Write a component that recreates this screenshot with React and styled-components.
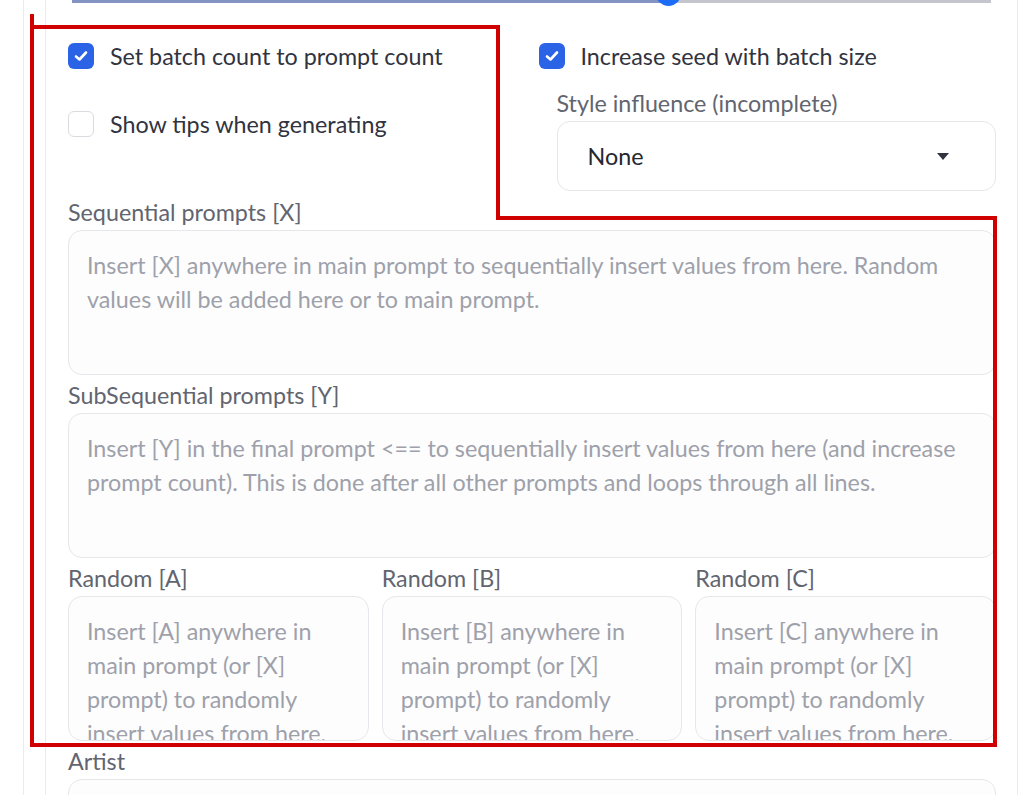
import React from "react";
import styled, { createGlobalStyle } from "styled-components";

const GlobalStyle = createGlobalStyle`
  html, body {
    margin: 0;
    padding: 0;
    background: #ffffff;
    font-family: Lato, "Noto Sans", sans-serif;
  }
  * { box-sizing: border-box; }
`;

const Page = styled.div`
  width: 1024px;
  height: 795px;
  overflow: hidden;
  position: relative;
  background: #ffffff;
`;

const Frame = styled.div`
  margin-left: 23px;
  width: 995px;
  height: 795px;
  border-left: 1px solid #ebebef;
  border-right: 1px solid #ebebef;
  padding-left: 21px;
`;

const Panel = styled.div`
  height: 100%;
  border-left: 1px solid #ebebef;
  padding: 0 21px 0 22px;
  display: flex;
  flex-direction: column;
`;

const Slider = styled.div`
  position: relative;
  flex: none;
  margin: 0 5px 0 4px;
  height: 3px;
  background: #c3c6cc;
`;

const SliderFill = styled.div`
  height: 100%;
  background: #8393c2;
`;

const SliderThumb = styled.div`
  position: absolute;
  top: -19px;
  width: 25px;
  height: 25px;
  margin-left: -12px;
  border-radius: 50%;
  background: #1c6cf5;
`;

const Columns = styled.div`
  display: grid;
  grid-template-columns: 1fr 1fr;
  column-gap: 13px;
  margin-top: 39px;
`;

const Column = styled.div`
  display: flex;
  flex-direction: column;
  gap: ${(p) => p.$gap || 0}px;
`;

const CheckRow = styled.label`
  display: flex;
  align-items: center;
  gap: 16px;
  height: 28px;
  font-size: 23.3px;
  color: #31333f;
  white-space: nowrap;
`;

const Box = styled.span`
  flex: none;
  width: 26px;
  height: 26px;
  border-radius: 6px;
  display: flex;
  align-items: center;
  justify-content: center;
  background: ${(p) => (p.$checked ? "#2a63e6" : "#ffffff")};
  border: ${(p) => (p.$checked ? "none" : "1.5px solid #d9dbe0")};
`;

const Field = styled.div`
  display: flex;
  flex-direction: column;
  gap: 4px;
  margin-left: ${(p) => p.$indent || 0}px;
`;

const Label = styled.div`
  height: 28px;
  line-height: 28px;
  font-size: 23.3px;
  color: #62656f;
  white-space: nowrap;
`;

const Select = styled.div`
  height: 70px;
  border: 1px solid #e6e7ea;
  border-radius: 13px;
  background: #ffffff;
  display: flex;
  align-items: center;
  justify-content: space-between;
  padding: 0 46px 0 30px;
  font-size: 23.3px;
  color: #262730;
`;

const Stack = styled.div`
  display: flex;
  flex-direction: column;
  gap: 6px;
  margin-top: 7px;
`;

const TextArea = styled.textarea`
  display: block;
  width: 100%;
  height: ${(p) => p.$h || 145}px;
  resize: none;
  overflow: hidden;
  border: 1px solid #e6e7ea;
  border-radius: 14px;
  background: #fdfdfe;
  padding: 17px 18px;
  font-family: Lato, "Noto Sans", sans-serif;
  font-size: 23.3px;
  line-height: 34px;
  color: #31333f;
  outline: none;
  &::placeholder {
    color: #9ea1aa;
    opacity: 1;
  }
`;

const Triple = styled.div`
  display: grid;
  grid-template-columns: repeat(3, 1fr);
  column-gap: 13px;
`;

const Markup = styled.svg`
  position: absolute;
  top: 0;
  left: 0;
  pointer-events: none;
`;

function Check({ checked, children }) {
  return (
    <CheckRow>
      <Box $checked={checked}>
        {checked && (
          <svg width="16" height="16" viewBox="0 0 16 16">
            <path d="M3 8.5 L6.5 11.5 L13 4.5" fill="none" stroke="#fff" strokeWidth="2.6" strokeLinecap="round" strokeLinejoin="round" />
          </svg>
        )}
      </Box>
      {children}
    </CheckRow>
  );
}

const randoms = ["A", "B", "C"];

export default function App() {
  const sliderValue = 0.648;
  return (
    <>
      <GlobalStyle />
      <Page>
        <Frame>
          <Panel>
            <Slider>
              <SliderFill style={{ width: `${sliderValue * 100}%` }} />
              <SliderThumb style={{ left: `${sliderValue * 100}%` }} />
            </Slider>

            <Columns>
              <Column $gap={40}>
                <Check checked>Set batch count to prompt count</Check>
                <Check>Show tips when generating</Check>
              </Column>
              <Column $gap={19}>
                <Check checked>Increase seed with batch size</Check>
                <Field $indent={18}>
                  <Label>Style influence (incomplete)</Label>
                  <Select>
                    None
                    <svg width="12" height="7" viewBox="0 0 12 7">
                      <path d="M0 0 H12 L6 7 Z" fill="#31333f" />
                    </svg>
                  </Select>
                </Field>
              </Column>
            </Columns>

            <Stack>
              <Field>
                <Label>Sequential prompts [X]</Label>
                <TextArea placeholder="Insert [X] anywhere in main prompt to sequentially insert values from here. Random values will be added here or to main prompt." />
              </Field>
              <Field>
                <Label>SubSequential prompts [Y]</Label>
                <TextArea placeholder="Insert [Y] in the final prompt <== to sequentially insert values from here (and increase prompt count). This is done after all other prompts and loops through all lines." />
              </Field>
              <Triple>
                {randoms.map((k) => (
                  <Field key={k}>
                    <Label>Random [{k}]</Label>
                    <TextArea
                      placeholder={`Insert [${k}] anywhere in main prompt (or [X] prompt) to randomly insert values from here.`}
                    />
                  </Field>
                ))}
              </Triple>
              <Field>
                <Label>Artist</Label>
                <TextArea $h={70} />
              </Field>
            </Stack>
          </Panel>
        </Frame>

        <Markup width="1024" height="795" viewBox="0 0 1024 795">
          <path
            d="M32 14 V745 H995 V218 H498 V27 H32"
            fill="none"
            stroke="#d00000"
            strokeWidth="4"
            strokeLinejoin="miter"
          />
        </Markup>
      </Page>
    </>
  );
}
